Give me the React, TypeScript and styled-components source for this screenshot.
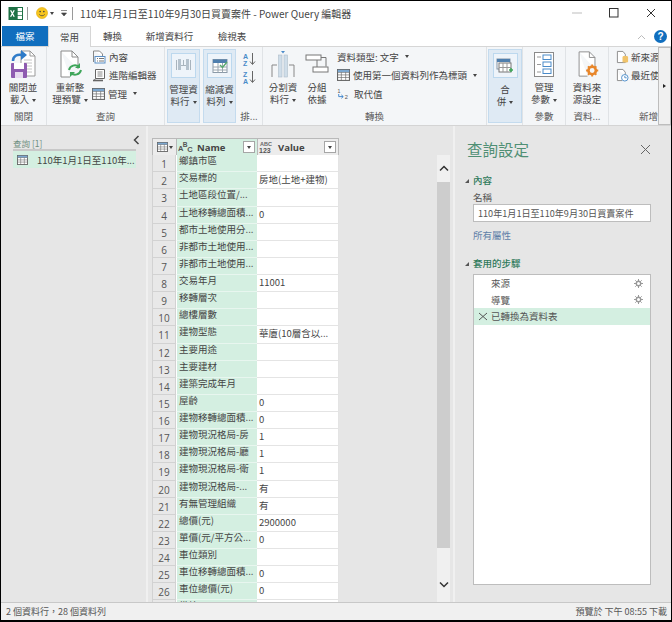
import React from "react";
import styled, { createGlobalStyle } from "styled-components";

const Global = createGlobalStyle`
  html, body { margin: 0; padding: 0; background: #fff; }
  * { box-sizing: border-box; }
  svg { flex: none; display: block; }
  #root { font-family: "Noto Sans CJK TC", "Noto Sans", sans-serif; }
`;

const Win = styled.div`
  width: 672px; height: 622px; border: 1px solid #000; border-bottom-width: 2px; background: #fff;
  display: flex; flex-direction: column; overflow: hidden; color: #444;
`;
const TitleBar = styled.div`height: 24px; display: flex; align-items: center; padding: 0 2px 0 7px; flex: none;`;
const Sep = styled.span`width: 1px; height: 13px; background: #9a9a9a; margin: 0 ${p => p.$m}px 0 ${p => p.$l}px; flex: none;`;
const Title = styled.div`font-size: 10px; color: #444; white-space: nowrap; flex: 1;`;
const WinBtn = styled.div`width: 37px; height: 24px; display: flex; align-items: center; justify-content: center; flex: none;`;
const QuickMenu = styled.span`margin-left: 6px; display: flex;`;

const TabRow = styled.div`height: 21px; display: flex; align-items: flex-end; flex: none; padding-left: 1px;`;
const FileTab = styled.div`width: 46px; height: 20px; background: #106ebe; color: #fff; font-size: 9.5px; display: flex; align-items: center; justify-content: center;`;
const Tab = styled.div`
  width: ${p => p.$w}px; height: ${p => (p.$active ? 21 : 20)}px; font-size: 9.5px; display: flex; align-items: center; justify-content: center;
  color: #444; background: ${p => (p.$active ? "#f4f6f8" : "transparent")};
  border: ${p => (p.$active ? "1px solid #d6d6d6" : "none")}; border-bottom: none; margin-bottom: ${p => (p.$active ? "-1px" : "0")}; position: relative; z-index: 1;
`;
const TabEnd = styled.div`margin-left: auto; display: flex; align-items: center; gap: 8px; padding: 0 4px 3px 0;`;
const Help = styled.div`width: 13px; height: 13px; border-radius: 50%; background: #106ebe; color: #fff; font: bold 10px "Liberation Sans", sans-serif; display: flex; align-items: center; justify-content: center;`;

const Ribbon = styled.div`height: 80px; flex: none; background: #f4f6f8; border-top: 1px solid #d6d6d6; border-bottom: 1px solid #d4d4d4; display: flex; font-size: 9.5px; line-height: 12px; color: #444;`;
const Group = styled.div`width: ${p => p.$w}px; flex: none; display: flex; flex-direction: ${p => (p.$row ? "row" : "column")}; overflow: hidden; border-right: ${p => (p.$last ? "none" : "1px solid #e0e3e6")};`;
const GroupBody = styled.div`flex: 1; display: flex; padding-top: 2px; min-height: 0; justify-content: ${p => (p.$center ? "center" : "flex-start")};`;
const GroupLabel = styled.div`height: 14px; text-align: center; color: #5a5a5a; font-size: 9.5px; line-height: 14px; flex: none; margin-bottom: 2px; white-space: nowrap; padding-left: ${p => p.$pl ?? 0}px;`;
const Big = styled.div`width: ${p => p.$w}px; flex: none; display: flex; flex-direction: column; align-items: center; text-align: center; margin-left: ${p => p.$ml ?? 0}px;`;
const BigIcon = styled.div`height: 30px; display: flex; align-items: center; justify-content: center; flex: none; margin-bottom: 2px;`;
const BigText = styled.div`text-align: center; white-space: nowrap;`;
const Lit = styled.div`
  width: ${p => p.$w}px; flex: none; margin: 2px 0 2px ${p => p.$ml}px; background: #dfeaf4; border: 1px solid #c4dbee;
  display: flex; flex-direction: column; align-items: center; text-align: center; padding-top: 3px;
`;
const LitBox = styled.div`width: 25px; height: 25px; background: #eef4fa; border: 1px solid #bcd8ee; display: flex; align-items: center; justify-content: center; margin-bottom: 5px; flex: none;`;
const SortCol = styled.div`flex: 1; display: flex; flex-direction: column; align-items: center; padding-top: 5px; gap: 3px;`;
const SortSpacer = styled.div`flex: 1;`;
const Stack = styled.div`display: flex; flex-direction: column; gap: 3.5px; margin-left: ${p => p.$ml ?? 0}px;`;
const Small = styled.div`display: flex; align-items: center; gap: ${p => p.$gap ?? 3}px; height: 15px; white-space: nowrap; flex: none;`;
const Caret = styled.span`display: inline-block; flex: none; width: 0; height: 0; border-left: 2.5px solid transparent; border-right: 2.5px solid transparent; border-top: 3px solid #444; margin-left: ${p => p.$ml ?? 3}px; vertical-align: middle;`;
const Scroller = styled.div`width: 13px; flex: none; margin-left: auto; background: #f0f0f0; border: 1px solid #bdbdbd; display: flex; align-items: center; justify-content: center;`;
const RightCaret = styled.span`width: 0; height: 0; border-top: 2.5px solid transparent; border-bottom: 2.5px solid transparent; border-left: 3px solid #222;`;

const Main = styled.div`flex: 1; min-height: 0; display: flex; background: #e6e6e6;`;
const Queries = styled.div`width: 147px; flex: none; padding: 11px 10px 0 12px; border-right: 2px solid #f0f0f0;`;
const QHead = styled.div`display: flex; justify-content: space-between; align-items: center; font-size: 8.5px; color: #6f8f80; height: 12px;`;
const Collapse = styled.span`margin: -6px -4px 0 0; display: flex;`;
const QLine = styled.div`height: 2px; background: #c8c8c8;`;
const QItem = styled.div`height: 17px; background: #d4efe1; display: flex; align-items: center; gap: 9px; padding-left: 4px; font-size: 9.5px; color: #444; white-space: nowrap;`;

const GridPane = styled.div`width: 307px; flex: none; padding: 12px 3px 0 4px; display: flex; justify-content: space-between; border-right: 2px solid #f0f0f0;`;
const GridWrap = styled.div`width: 187px; overflow: hidden; align-self: stretch;`;
const Grid = styled.div`display: grid; grid-template-columns: 24px 81px 82px; grid-auto-rows: 17.14px; font-size: 9.5px;`;
const HeadCell = styled.div`
  height: 18px; background: ${p => p.$c ?? "#ececec"}; border: 1px solid #b9b9b9; border-right: ${p => (p.$last ? "1px solid #b9b9b9" : "none")}; display: flex; align-items: center; justify-content: ${p => (p.$corner ? "center" : "flex-start")}; padding: 0 2px 0 ${p => (p.$corner ? 2 : 1)}px; gap: ${p => (p.$corner ? 1 : 4)}px;
  font: bold 9.5px "Open Sans", "Liberation Sans", sans-serif; color: #444;
`;
const NumCell = styled.div`background: #e8e8e8; border: 1px solid #d2d2d2; border-top: none; color: #555; font: 10px "Open Sans", sans-serif; display: flex; align-items: center; justify-content: center; padding-top: 2px;`;
const NameCell = styled.div`background: #d4efe1; border-bottom: 1px solid #e8f6ef; border-left: 1px solid #fff; padding-left: 2px; white-space: nowrap; line-height: 11px; color: #444;`;
const ValCell = styled.div`background: #fff; border-bottom: 1px solid #e4e4e4; border-right: 1px solid #e4e4e4; padding: 0 0 0 2px; white-space: nowrap; line-height: 15px; color: #444;`;
const FilterBtn = styled.div`margin-left: auto; width: 12px; height: 12px; background: #fff; border: 1px solid #a6a6a6; display: flex; align-items: center; justify-content: center;`;
const ScrollBar = styled.div`width: 13px; flex: none; background: #f0f0f0; display: flex; flex-direction: column; align-items: center; margin: 17px 0 0;`;
const ScrollArrow = styled.div`height: 27px; flex: none; display: flex; align-items: center; justify-content: center;`;
const ScrollThumb = styled.div`width: 13px; flex: 1; background: #cdcdcd; margin-bottom: 23px;`;
const ScrollEnd = styled.div`height: 4px; flex: none;`;

const Settings = styled.div`flex: 1; padding: 10px 20px 17px 10px; display: flex; flex-direction: column; min-width: 0;`;
const SetHead = styled.div`display: flex; justify-content: space-between; align-items: center; font-size: 15.5px; color: #4f8f74; height: 26px; padding-left: 2px; margin-bottom: 11px; flex: none;`;
const Section = styled.div`font-size: 9.5px; color: #2f7a5b; display: flex; align-items: center; gap: 4px; font-weight: 500; height: 14px; flex: none;`;
const Tri = styled.span`width: 0; height: 0; border-left: 4px solid transparent; border-bottom: 4px solid #555; margin-top: 2px;`;
const Field = styled.div`font-size: 9.5px; color: #555; margin: 3px 0 0 8px; height: 14px; line-height: 14px; flex: none;`;
const Input = styled.div`margin-left: 8px; height: 18px; background: #fff; border: 1px solid #bdbdbd; font-size: 9.1px; color: #555; padding-left: 4px; line-height: 16px; white-space: nowrap; overflow: hidden; flex: none;`;
const Link = styled.div`margin: 6px 0 14px 8px; font-size: 9.5px; color: #5f7fa8; height: 14px; line-height: 14px; flex: none;`;
const Steps = styled.div`flex: 1; margin: 4px 0 0 8px; background: #fff; border: 1px solid #bdbdbd;`;
const Step = styled.div`height: 16.5px; display: flex; align-items: center; padding: 0 7px 0 4px; font-size: 9.5px; color: #555; background: ${p => (p.$active ? "#d4efe1" : "transparent")};`;
const StepIcon = styled.span`width: 13px; flex: none; display: flex; align-items: center;`;
const StepName = styled.span`flex: 1;`;

const Status = styled.div`height: 18px; flex: none; background: #f0f0f0; border-top: 1px solid #c8c8c8; display: flex; justify-content: space-between; align-items: center; font-size: 9px; color: #555; padding: 0 4px 0 5px;`;

const Excel = () => (
  <svg width="15" height="15" viewBox="0 0 15 15">
    <rect x="5.5" y="1.5" width="9" height="12" fill="#fff" stroke="#1e7145" />
    <path d="M9 1.5v12M5.5 5.5h9M5.5 9.5h9" stroke="#1e7145" strokeWidth=".7" />
    <rect x="0.5" y="1" width="9" height="13" fill="#1e7145" />
    <path d="M2.6 4.2l3.6 6.6M6.2 4.2l-3.6 6.6" stroke="#fff" strokeWidth="1.3" />
  </svg>
);
const Smile = () => (
  <svg width="12" height="12" viewBox="0 0 13 13">
    <circle cx="6.5" cy="6.5" r="6" fill="#f6c51f" stroke="#e0a800" strokeWidth=".6" />
    <circle cx="4.5" cy="5" r=".9" fill="#444" /><circle cx="8.5" cy="5" r=".9" fill="#444" />
    <path d="M3.5 8c1.5 2 4.5 2 6 0" fill="none" stroke="#444" strokeWidth=".8" />
  </svg>
);
const TableIcon = ({ size = 12, c = "#666", head = "#7ba7d0" }: any) => (
  <svg width={size} height={size - 1} viewBox="0 0 12 11">
    <rect x=".5" y=".5" width="11" height="10" fill="#fff" stroke={c} />
    <rect x=".5" y=".5" width="11" height="2.5" fill={head} stroke={c} strokeWidth=".5" />
    <path d="M4 3v7.5M8 3v7.5M.5 5.4h11M.5 7.8h11" stroke={c} strokeWidth=".6" />
  </svg>
);
const ApplyIcon = () => (
  <svg width="26" height="29" viewBox="0 0 26 29">
    <path d="M11 1h9l5 5v20H11z" fill="#fff" stroke="#999" />
    <path d="M20 1v5h5" fill="none" stroke="#999" />
    <path d="M14 10h8M14 13h8M14 16h8M14 19h8M14 22h8" stroke="#c4c4c4" />
    <path d="M3 11c0-5 4-7 9-6" fill="none" stroke="#2f7cc9" strokeWidth="2.6" />
    <path d="M11 0l6 5-6 5z" fill="#2f7cc9" />
    <rect x="1" y="13" width="16" height="15" rx="1" fill="#8e5bb0" />
    <rect x="4" y="13" width="10" height="6" fill="#fff" /><rect x="5" y="22" width="8" height="6" fill="#e6d9ef" />
  </svg>
);
const RefreshIcon = () => (
  <svg width="25" height="29" viewBox="0 0 25 29">
    <path d="M3 1h11l6 6v12M3 1v26h9" fill="#fff" stroke="#8a8a8a" /><path d="M14 1v6h6" fill="none" stroke="#8a8a8a" />
    <path d="M11 20a6 6 0 0 1 10-3" fill="none" stroke="#3fa65a" strokeWidth="2" />
    <path d="M23 20a6 6 0 0 1-10 3" fill="none" stroke="#3fa65a" strokeWidth="2" />
    <path d="M22 13v5h-5zM12 27v-5h5z" fill="#3fa65a" />
  </svg>
);
const PropsIcon = () => (
  <svg width="14" height="14" viewBox="0 0 14 14">
    <path d="M1.5 1h6l3 3v2" fill="#fff" stroke="#888" /><path d="M1.5 1v11" stroke="#888" />
    <rect x="3" y="6.5" width="10" height="6.5" fill="#fff" stroke="#5b8fc5" />
    <path d="M5 8.5h1M7 8.5h5M5 11h1M7 11h5" stroke="#777" />
  </svg>
);
const AdvIcon = () => (
  <svg width="14" height="14" viewBox="0 0 14 14">
    <path d="M3.5 1.5h9v9h-9z" fill="#fff" stroke="#666" />
    <path d="M5.5 4h5M5.5 6h5M5.5 8h5" stroke="#888" />
    <path d="M1 12.5h10" stroke="#666" strokeWidth="1.6" /><path d="M3.5 10.5L2.5 12" stroke="#666" />
  </svg>
);
const ColsIcon = () => (
  <svg width="17" height="17" viewBox="0 0 17 17">
    <path d="M1.5 3v10M15.5 3v10M8.5 3v5" stroke="#a9b4bd" strokeWidth="1" />
    <rect x="3" y="2" width="3" height="11" fill="#b5c2cd" /><rect x="11" y="2" width="3" height="11" fill="#b5c2cd" />
    <path d="M6 8.5h5" stroke="#a9b4bd" />
  </svg>
);
const RowsIcon = () => (
  <svg width="18" height="16" viewBox="0 0 18 16">
    <rect x="2" y="1.5" width="14" height="13" fill="#fff" stroke="#8b9aa8" />
    <rect x="2" y="1.5" width="14" height="3.5" fill="#4f7fae" />
    <path d="M2 9h14M2 12h14M7 5v9.5M11.5 5v9.5" stroke="#9aa6b0" />
    <path d="M9 7l2.5 2.5L16 4" fill="none" stroke="#56a96d" strokeWidth="1.4" />
  </svg>
);
const SortIcon = ({ rev }: { rev?: boolean }) => (
  <svg width="14" height="15" viewBox="0 0 14 15">
    <text x="1" y="6.5" fontSize="7" fontWeight="700" fontFamily="Liberation Sans" fill="#4a8bc9">{rev ? "Z" : "A"}</text>
    <text x="1" y="13.5" fontSize="7" fontWeight="700" fontFamily="Liberation Sans" fill="#4a8bc9">{rev ? "A" : "Z"}</text>
    <path d="M10.5 1v11M8 9.5l2.5 3 2.5-3" fill="none" stroke="#666" />
  </svg>
);
const SplitIcon = () => (
  <svg width="26" height="28" viewBox="0 0 26 28">
    <path d="M2 27V15h5M24 27V15h-5" fill="none" stroke="#888" />
    <rect x="8.5" y="5" width="3.5" height="22" fill="#cfdde9" stroke="#aebdca" strokeWidth=".6" />
    <rect x="14" y="5" width="3.5" height="22" fill="#cfdde9" stroke="#aebdca" strokeWidth=".6" />
    <path d="M11 1h4l-2 2.5z" fill="#4a8bc9" />
  </svg>
);
const GroupIcon = () => (
  <svg width="24" height="24" viewBox="0 0 24 24">
    <rect x="1" y="3" width="15" height="5" fill="#fff" stroke="#777" />
    <rect x="8" y="15" width="15" height="5" fill="#fff" stroke="#777" />
    <path d="M16 5.5h5v9M12 8v7" fill="none" stroke="#777" />
  </svg>
);
const ReplaceIcon = () => (
  <svg width="13" height="14" viewBox="0 0 15 14">
    <text x="0.5" y="5.5" fontSize="6" fontFamily="Liberation Sans" fill="#555">1</text>
    <text x="9" y="13" fontSize="6.5" fontFamily="Liberation Sans" fill="#555">2</text>
    <path d="M2 7v3h5M5 8l2.2 2L5 12" fill="none" stroke="#2f7cc9" strokeWidth="1" />
  </svg>
);
const MergeIcon = () => (
  <svg width="18" height="16" viewBox="0 0 18 16">
    <rect x="1" y="1" width="13" height="10" fill="#fff" stroke="#8393a3" />
    <rect x="1" y="1" width="13" height="3" fill="#4f7fae" />
    <rect x="3" y="5" width="12" height="9" fill="#fff" stroke="#777" />
    <path d="M7 5v9M11 5v9M3 9.5h12" stroke="#999" />
    <path d="M13 12h4M15 10v4" stroke="#3fa65a" strokeWidth="1.5" />
  </svg>
);
const ParamsIcon = () => (
  <svg width="20" height="25" viewBox="0 0 20 25">
    <rect x=".5" y=".5" width="19" height="24" fill="#fff" stroke="#8a8a8a" />
    <path d="M3 5h4M3 12.5h4M3 20h4" stroke="#999" />
    <rect x="9" y="3" width="8" height="4.5" fill="#fff" stroke="#4a8bc9" />
    <rect x="9" y="10" width="8" height="4.5" fill="#fff" stroke="#4a8bc9" />
    <rect x="9" y="17" width="8" height="4.5" fill="#fff" stroke="#4a8bc9" />
  </svg>
);
const SourceIcon = () => (
  <svg width="23" height="28" viewBox="0 0 24 30">
    <path d="M3 2h11l6 6v12M3 2v26h9" fill="#fff" stroke="#8a8a8a" /><path d="M14 2v6h6" fill="none" stroke="#8a8a8a" />
    <circle cx="17" cy="22" r="4" fill="none" stroke="#e8862a" strokeWidth="2.8" />
    <path d="M17 15.5v2.5M17 26v2.5M10.5 22H13M21 22h2.5M12.5 17.5l1.8 1.8M19.7 24.7l1.8 1.8M21.5 17.5l-1.8 1.8M14.3 24.7l-1.8 1.8" stroke="#e8862a" strokeWidth="2" />
  </svg>
);
const NewSrc = () => (
  <svg width="13" height="14" viewBox="0 0 14 14">
    <path d="M1.5 1h6l2.5 3v9h-8.5z" fill="#fff" stroke="#888" />
    <rect x="7" y="6" width="6" height="7" rx="1.5" fill="#f0c36a" />
  </svg>
);
const RecentSrc = () => (
  <svg width="13" height="14" viewBox="0 0 14 14">
    <path d="M1.5 1h6l2.5 3v3M1.5 1v12h5" fill="#fff" stroke="#888" />
    <circle cx="9.5" cy="10" r="3.5" fill="#fff" stroke="#4a8bc9" /><path d="M9.5 8v2h2" fill="none" stroke="#4a8bc9" />
  </svg>
);
const Gear = () => (
  <svg width="9" height="9" viewBox="0 0 9 9">
    <circle cx="4.5" cy="4.5" r="2.2" fill="none" stroke="#999" strokeWidth="1.4" />
    <path d="M4.5 0v2M4.5 7v2M0 4.5h2M7 4.5h2M1.3 1.3l1.4 1.4M6.3 6.3l1.4 1.4M7.7 1.3L6.3 2.7M2.7 6.3L1.3 7.7" stroke="#999" />
  </svg>
);
const AbcIcon = () => (
  <svg width="15" height="14" viewBox="0 0 17 14">
    <text x="0" y="12" fontSize="8.5" fontFamily="Liberation Sans" fontWeight="700" fill="#555">A</text>
    <text x="5.5" y="7" fontSize="7.5" fontFamily="Liberation Sans" fontWeight="700" fill="#555">B</text>
    <text x="10.5" y="13" fontSize="8.5" fontFamily="Liberation Sans" fontWeight="700" fill="#555">C</text>
  </svg>
);
const Abc123Icon = () => (
  <svg width="15" height="14" viewBox="0 0 15 14">
    <text x="1" y="6" fontSize="5.5" fontFamily="Liberation Sans" fontWeight="700" fill="#666">ABC</text>
    <text x="0" y="13" fontSize="7" fontFamily="Liberation Sans" fontWeight="700" fill="#555">123</text>
  </svg>
);

const rows: [string, string][] = [
  ["鄉鎮市區", ""], ["交易標的", "房地(土地+建物)"], ["土地區段位置/...", ""], ["土地移轉總面積...", "0"],
  ["都市土地使用分...", ""], ["非都市土地使用...", ""], ["非都市土地使用...", ""], ["交易年月", "11001"],
  ["移轉層次", ""], ["總樓層數", ""], ["建物型態", "華廈(10層含以..."], ["主要用途", ""], ["主要建材", ""],
  ["建築完成年月", ""], ["屋齡", "0"], ["建物移轉總面積...", "0"], ["建物現況格局-房", "1"], ["建物現況格局-廳", "1"],
  ["建物現況格局-衛", "1"], ["建物現況格局-...", "有"], ["有無管理組織", "有"], ["總價(元)", "2900000"],
  ["單價(元/平方公...", "0"], ["車位類別", ""], ["車位移轉總面積...", "0"], ["車位總價(元)", "0"], ["備註", ""],
];

export default function App() {
  return (
    <Win>
      <Global />
      <TitleBar>
        <Excel />
        <Sep $l={4} $m={8} />
        <Smile />
        <Caret $ml={2} />
        <QuickMenu><svg width="8" height="8" viewBox="0 0 8 8"><path d="M1 1.5h6M1.5 4h5l-2.5 3z" fill="#444" stroke="#444" strokeWidth=".6" /></svg></QuickMenu>
        <Sep $l={4} $m={7} />
        <Title>110年1月1日至110年9月30日買賣案件 - Power Query 編輯器</Title>
        <WinBtn><svg width="10" height="10"><path d="M0 5h10" stroke="#bdbdbd" /></svg></WinBtn>
        <WinBtn><svg width="10" height="10"><rect x=".5" y=".5" width="8.5" height="8.5" fill="none" stroke="#333" /></svg></WinBtn>
        <WinBtn><svg width="10" height="10"><path d="M1 1l8 8M9 1l-8 8" stroke="#333" /></svg></WinBtn>
      </TitleBar>
      <TabRow>
        <FileTab>檔案</FileTab>
        <Tab $w={43} $active>常用</Tab>
        <Tab $w={43}>轉換</Tab>
        <Tab $w={71}>新增資料行</Tab>
        <Tab $w={54}>檢視表</Tab>
        <TabEnd>
          <svg width="9" height="6"><path d="M1 5l3.5-3.5L8 5" fill="none" stroke="#bbb" /></svg>
          <Help>?</Help>
        </TabEnd>
      </TabRow>
      <Ribbon>
        <Group $w={46}>
          <GroupBody>
            <Big $w={44}>
              <BigIcon><ApplyIcon /></BigIcon>
              <BigText>關閉並<br />載入<Caret /></BigText>
            </Big>
          </GroupBody>
          <GroupLabel>關閉</GroupLabel>
        </Group>
        <Group $w={118}>
          <GroupBody>
            <Big $w={42} $ml={2}>
              <BigIcon><RefreshIcon /></BigIcon>
              <BigText>重新整<br />理預覽<Caret /></BigText>
            </Big>
            <Stack $ml={1}>
              <Small><PropsIcon />內容</Small>
              <Small><AdvIcon />進階編輯器</Small>
              <Small><TableIcon size={13} />管理<Caret /></Small>
            </Stack>
          </GroupBody>
          <GroupLabel>查詢</GroupLabel>
        </Group>
        <Group $w={98} $row>
          <Lit $ml={2} $w={33}><LitBox><ColsIcon /></LitBox><BigText>管理資<br />料行<Caret /></BigText></Lit>
          <Lit $ml={3} $w={33}><LitBox><RowsIcon /></LitBox><BigText>縮減資<br />料列<Caret /></BigText></Lit>
          <SortCol>
            <SortIcon /><SortIcon rev />
            <SortSpacer />
            <GroupLabel>排...</GroupLabel>
          </SortCol>
        </Group>
        <Group $w={224}>
          <GroupBody>
            <Big $w={36} $ml={2}>
              <BigIcon><SplitIcon /></BigIcon>
              <BigText>分割資<br />料行<Caret /></BigText>
            </Big>
            <Big $w={30} $ml={1}>
              <BigIcon><GroupIcon /></BigIcon>
              <BigText>分組<br />依據</BigText>
            </Big>
            <Stack $ml={5}>
              <Small>資料類型: 文字<Caret /></Small>
              <Small><TableIcon size={13} />使用第一個資料列作為標頭<Caret /></Small>
              <Small $gap={4}><ReplaceIcon />取代值</Small>
            </Stack>
          </GroupBody>
          <GroupLabel>轉換</GroupLabel>
        </Group>
        <Group $w={36} $row>
          <Lit $ml={1} $w={34}><LitBox><MergeIcon /></LitBox><BigText>合<br />併<Caret /></BigText></Lit>
        </Group>
        <Group $w={43}>
          <GroupBody $center>
            <Big $w={38}>
              <BigIcon><ParamsIcon /></BigIcon>
              <BigText>管理<br />參數<Caret /></BigText>
            </Big>
          </GroupBody>
          <GroupLabel>參數</GroupLabel>
        </Group>
        <Group $w={43}>
          <GroupBody $center>
            <Big $w={38}>
              <BigIcon><SourceIcon /></BigIcon>
              <BigText>資料來<br />源設定</BigText>
            </Big>
          </GroupBody>
          <GroupLabel>資料...</GroupLabel>
        </Group>
        <Group $w={49} $last>
          <GroupBody>
            <Stack $ml={7}>
              <Small $gap={2}><NewSrc />新來源</Small>
              <Small $gap={2}><RecentSrc />最近使</Small>
            </Stack>
          </GroupBody>
          <GroupLabel $pl={30}>新增</GroupLabel>
        </Group>
        <Scroller><RightCaret /></Scroller>
      </Ribbon>
      <Main>
        <Queries>
          <QHead>
            <span>查詢 [1]</span>
            <Collapse><svg width="7" height="10" viewBox="0 0 7 10"><path d="M5.5 1L1.5 5l4 4" fill="none" stroke="#444" strokeWidth="1.5" /></svg></Collapse>
          </QHead>
          <QLine />
          <QItem><TableIcon size={11} />110年1月1日至110年...</QItem>
        </Queries>
        <GridPane>
          <GridWrap>
            <Grid>
              <HeadCell $corner><TableIcon size={11} /><Caret $ml={0} /></HeadCell>
              <HeadCell $c="#d4efe1"><AbcIcon />Name<FilterBtn><Caret $ml={0} /></FilterBtn></HeadCell>
              <HeadCell $last><Abc123Icon />Value<FilterBtn><Caret $ml={0} /></FilterBtn></HeadCell>
              {rows.map((r, i) => (
                <React.Fragment key={i}>
                  <NumCell>{i + 1}</NumCell>
                  <NameCell>{r[0]}</NameCell>
                  <ValCell>{r[1]}</ValCell>
                </React.Fragment>
              ))}
            </Grid>
          </GridWrap>
          <ScrollBar>
            <ScrollArrow><svg width="10" height="7"><path d="M1 5.5L5 1.5l4 4" fill="none" stroke="#333" strokeWidth="1.5" /></svg></ScrollArrow>
            <ScrollThumb />
            <ScrollArrow><svg width="10" height="7"><path d="M1 1.5L5 5.5l4-4" fill="none" stroke="#333" strokeWidth="1.5" /></svg></ScrollArrow>
            <ScrollEnd />
          </ScrollBar>
        </GridPane>
        <Settings>
          <SetHead>
            <span>查詢設定</span>
            <svg width="11" height="11"><path d="M1 1l9 9M10 1l-9 9" stroke="#666" /></svg>
          </SetHead>
          <Section><Tri />內容</Section>
          <Field>名稱</Field>
          <Input>110年1月1日至110年9月30日買賣案件</Input>
          <Link>所有屬性</Link>
          <Section><Tri />套用的步驟</Section>
          <Steps>
            <Step><StepIcon /><StepName>來源</StepName><Gear /></Step>
            <Step><StepIcon /><StepName>導覽</StepName><Gear /></Step>
            <Step $active><StepIcon><svg width="10" height="9"><path d="M1 1l8 7M9 1L1 8" stroke="#555" /></svg></StepIcon><StepName>已轉換為資料表</StepName></Step>
          </Steps>
        </Settings>
      </Main>
      <Status>
        <span>2 個資料行，28 個資料列</span>
        <span>預覽於 下午 08:55 下載</span>
      </Status>
    </Win>
  );
}
